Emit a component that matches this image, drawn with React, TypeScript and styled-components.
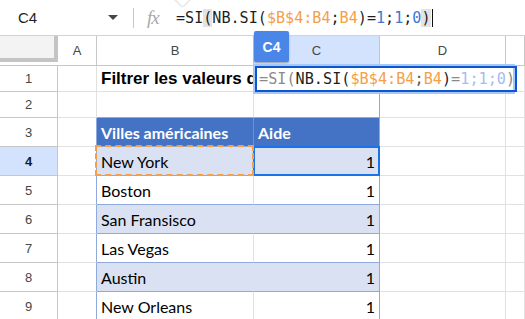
import styled, { createGlobalStyle } from "styled-components";

const GlobalStyle = createGlobalStyle`
  html, body {
    margin: 0;
    padding: 0;
    background: #ffffff;
    overflow: hidden;
  }
  body {
    font-family: "Liberation Sans", Arial, sans-serif;
  }
`;

const GRID = "#e1e1e1";
const HEAD_LINE = "#c7c7c7";
const TABLE_LINE = "#8eaadb";
const ORANGE = "#f5a047";
const MONO = `"DejaVu Sans Mono", "Liberation Mono", monospace`;

const Page = styled.div`
  width: 525px;
  height: 319px;
  overflow: hidden;
  position: relative;
`;

const FormulaBar = styled.div`
  position: relative;
  height: 35px;
  border-bottom: 1px solid #d3d3d3;
  display: flex;
  align-items: center;
`;

const NameBox = styled.div`
  width: 124px;
  box-sizing: border-box;
  padding: 0 6px 0 18px;
  display: flex;
  align-items: center;
  justify-content: space-between;
  font-size: 15px;
  color: #1f1f1f;
`;

const Divider = styled.div`
  width: 1px;
  height: 20px;
  margin-left: 9px;
  background: #c7c7c7;
`;

const Fx = styled.div`
  margin-left: 13px;
  width: 18px;
  font-family: "Liberation Serif", serif;
  font-style: italic;
  font-size: 19px;
  color: #a9a9a9;
  letter-spacing: -1px;
`;

const FormulaText = styled.div`
  margin-left: 11px;
  font-family: ${MONO};
  font-size: 15.1px;
  color: #1f1f1f;
  white-space: pre;
  display: flex;
  align-items: center;
`;

const Tok = styled.span<{ $c?: string; $hl?: boolean }>`
  color: ${(p) => p.$c ?? "inherit"};
  background: ${(p) => (p.$hl ? "#e3e3e3" : "transparent")};
`;

const Cursor = styled.span`
  display: inline-block;
  width: 1px;
  height: 18px;
  background: #111;
  margin-left: 1px;
`;

const TooltipTip = styled.div`
  position: absolute;
  top: -9px;
  left: 176px;
  width: 13px;
  height: 13px;
  background: #fff;
  transform: rotate(45deg);
  box-shadow: 0 0 2px rgba(0, 0, 0, 0.35);
`;

const Sheet = styled.div`
  position: relative;
  display: grid;
  grid-template-columns: 58px 39px 157px 126px 126px 1fr;
  grid-template-rows: 30px 26px 26px repeat(7, 29px);
`;

const Corner = styled.div`
  box-sizing: border-box;
  padding-bottom: 3px;
  border-bottom: 1px solid ${HEAD_LINE};
`;

const CornerBox = styled.div`
  height: 100%;
  box-sizing: border-box;
  background: #f3f3f3;
  border-right: 4px solid #c4c4c4;
  border-bottom: 4px solid #c4c4c4;
`;

const ColHead = styled.div<{ $active?: boolean }>`
  box-sizing: border-box;
  border-right: 1px solid ${HEAD_LINE};
  border-bottom: 1px solid ${HEAD_LINE};
  background: ${(p) => (p.$active ? "#d3e3fd" : "#ffffff")};
  display: flex;
  align-items: center;
  justify-content: center;
  font-size: 13px;
  color: #444746;
`;

const RowHead = styled.div<{ $active?: boolean }>`
  box-sizing: border-box;
  border-right: 1px solid ${HEAD_LINE};
  border-bottom: 1px solid ${HEAD_LINE};
  background: ${(p) => (p.$active ? "#d3e3fd" : "#ffffff")};
  display: flex;
  align-items: center;
  justify-content: center;
  font-size: 13px;
  font-weight: ${(p) => (p.$active ? 700 : 400)};
  color: ${(p) => (p.$active ? "#0b1f3a" : "#444746")};
`;

const Cell = styled.div<{
  $bg?: string;
  $right?: string;
  $bottom?: string;
  $align?: "left" | "right";
  $head?: boolean;
}>`
  box-sizing: border-box;
  min-width: 0;
  border-right: 1px solid ${(p) => p.$right ?? GRID};
  border-bottom: 1px solid ${(p) => p.$bottom ?? GRID};
  background: ${(p) => p.$bg ?? "#ffffff"};
  display: flex;
  align-items: center;
  justify-content: ${(p) => (p.$align === "right" ? "flex-end" : "flex-start")};
  padding: 1px 4px 0 4px;
  font-family: Lato, "Open Sans", sans-serif;
  font-size: 16px;
  font-weight: ${(p) => (p.$head ? 700 : 400)};
  color: ${(p) => (p.$head ? "#ffffff" : "#000000")};
  white-space: nowrap;
`;

const TitleCell = styled.div`
  box-sizing: border-box;
  border-right: 1px solid ${GRID};
  border-bottom: 1px solid ${GRID};
  display: flex;
  align-items: center;
  padding-left: 4px;
  font-weight: 700;
  font-size: 17px;
  color: #000;
  white-space: nowrap;
  overflow: hidden;
`;

const ColLabel = styled.div`
  position: absolute;
  left: 254px;
  top: -5px;
  width: 35px;
  height: 31px;
  border-radius: 2px;
  background: #4a86e8;
  box-shadow: 0 1px 2px rgba(0, 0, 0, 0.3);
  display: flex;
  align-items: center;
  justify-content: center;
  color: #fff;
  font-weight: 700;
  font-size: 14px;
  z-index: 3;
`;

const Editor = styled.div`
  position: absolute;
  left: 253px;
  top: 28px;
  width: 262px;
  height: 30px;
  box-sizing: border-box;
  background: #ffffff;
  border: 2px solid #a8c7fa;
  z-index: 4;
  display: flex;
`;

const EditorInner = styled.div`
  flex: 1;
  border: 2px solid #0b57d0;
  display: flex;
  align-items: center;
  padding-left: 2px;
  font-family: ${MONO};
  font-size: 15.2px;
  white-space: pre;
  color: #8a8a8a;
`;

const Selection = styled.div`
  position: absolute;
  left: 253px;
  top: 110px;
  width: 127px;
  height: 30px;
  box-sizing: border-box;
  border: 2px solid #1a73e8;
  z-index: 2;
`;

const CopyMarquee = styled.div`
  position: absolute;
  left: 95px;
  top: 109px;
  width: 159px;
  height: 31px;
  box-sizing: border-box;
  border: 2px dashed ${ORANGE};
  z-index: 2;
`;

const Caret = () => (
  <svg width="10" height="6" viewBox="0 0 10 6">
    <path d="M0 0 L10 0 L5 5 Z" fill="#444746" />
  </svg>
);

const cities = ["New York", "Boston", "San Fransisco", "Las Vegas", "Austin", "New Orleans"];

export default function App() {
  return (
    <Page>
      <GlobalStyle />
      <FormulaBar>
        <TooltipTip />
        <NameBox>
          <span>C4</span>
          <Caret />
        </NameBox>
        <Divider />
        <Fx>fx</Fx>
        <FormulaText>
          <Tok>=SI</Tok>
          <Tok $hl>(</Tok>
          <Tok>NB.SI(</Tok>
          <Tok $c={ORANGE}>$B$4:B4</Tok>
          <Tok>;</Tok>
          <Tok $c={ORANGE}>B4</Tok>
          <Tok>)=</Tok>
          <Tok $c="#3b78d8">1</Tok>
          <Tok>;</Tok>
          <Tok $c="#3b78d8">1</Tok>
          <Tok>;</Tok>
          <Tok $c="#3b78d8">0</Tok>
          <Tok $hl>)</Tok>
          <Cursor />
        </FormulaText>
      </FormulaBar>

      <Sheet>
        <Corner>
          <CornerBox />
        </Corner>
        <ColHead>A</ColHead>
        <ColHead>B</ColHead>
        <ColHead $active>C</ColHead>
        <ColHead>D</ColHead>
        <ColHead />

        <RowHead>1</RowHead>
        <Cell />
        <TitleCell>Filtrer les valeurs dupliquées</TitleCell>
        <Cell />
        <Cell />
        <Cell />

        <RowHead>2</RowHead>
        <Cell />
        <Cell $bottom={TABLE_LINE} />
        <Cell $bottom={TABLE_LINE} $right={TABLE_LINE} />
        <Cell />
        <Cell />

        <RowHead>3</RowHead>
        <Cell $right={TABLE_LINE} />
        <Cell $head $bg="#4472c4" $right="#6f90d0" $bottom={TABLE_LINE}>
          Villes américaines
        </Cell>
        <Cell $head $bg="#4472c4" $right={TABLE_LINE} $bottom={TABLE_LINE}>
          Aide
        </Cell>
        <Cell />
        <Cell />

        {cities.map((city, i) => {
          const shaded = i % 2 === 0;
          const bg = shaded ? "#d9e1f2" : "#ffffff";
          return [
            <RowHead key={`h${i}`} $active={i === 0}>
              {i + 4}
            </RowHead>,
            <Cell key={`a${i}`} $right={TABLE_LINE} />,
            <Cell key={`b${i}`} $bg={bg} $right={GRID} $bottom={TABLE_LINE}>
              {city}
            </Cell>,
            <Cell key={`c${i}`} $bg={bg} $right={TABLE_LINE} $bottom={TABLE_LINE} $align="right">
              1
            </Cell>,
            <Cell key={`d${i}`} />,
            <Cell key={`e${i}`} />,
          ];
        })}

        <ColLabel>C4</ColLabel>
        <Editor>
          <EditorInner>
            <Tok>=SI(</Tok>
            <Tok $c="#1f1f1f">NB.SI(</Tok>
            <Tok $c={ORANGE}>$B$4:B4</Tok>
            <Tok $c="#555">;</Tok>
            <Tok $c={ORANGE}>B4</Tok>
            <Tok $c="#1f1f1f">)</Tok>
            <Tok>=</Tok>
            <Tok $c="#a4bdf0">1;1;0</Tok>
            <Tok>)</Tok>
          </EditorInner>
        </Editor>
        <Selection />
        <CopyMarquee />
      </Sheet>
    </Page>
  );
}
